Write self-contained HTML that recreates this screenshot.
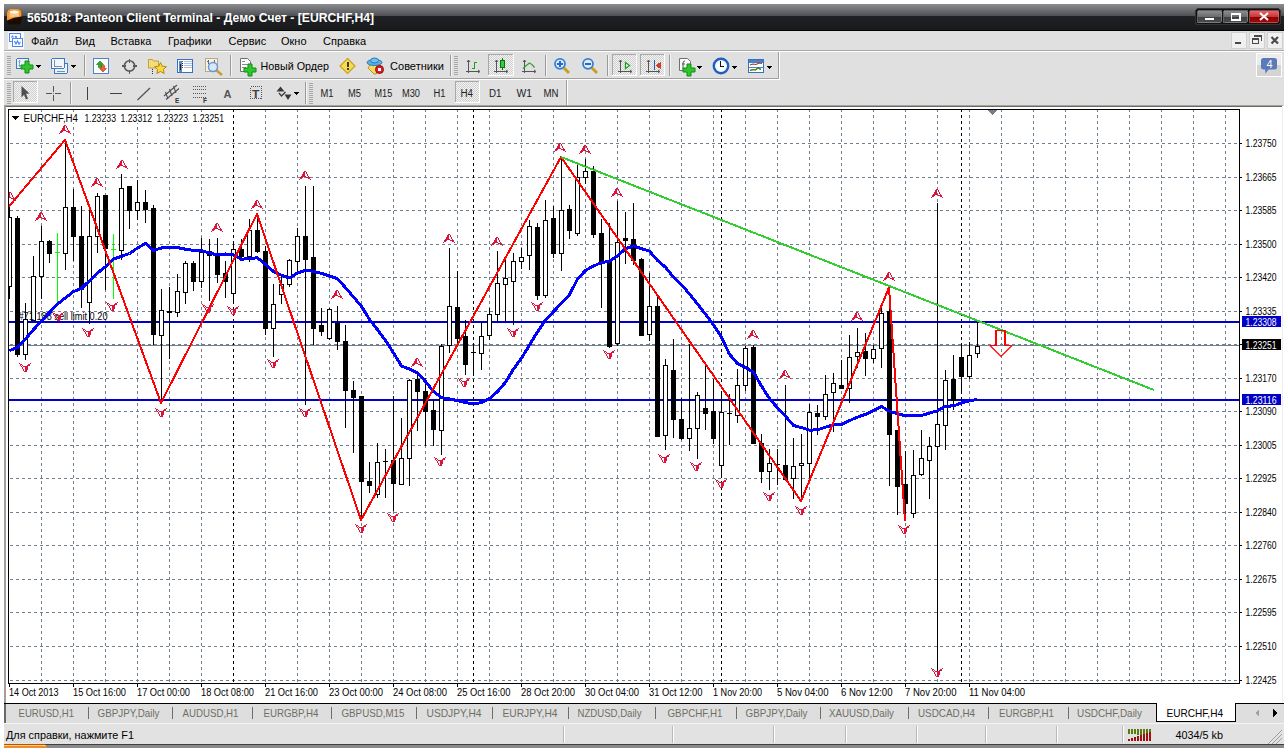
<!DOCTYPE html><html><head><meta charset="utf-8"><style>html,body{margin:0;padding:0;background:#fff;overflow:hidden}svg{display:block}</style></head><body><svg width="1288" height="748" viewBox="0 0 1288 748" font-family="Liberation Sans" shape-rendering="crispEdges">
<defs>
<linearGradient id="tb" x1="0" y1="0" x2="0" y2="1">
 <stop offset="0" stop-color="#8b8d91"/><stop offset="0.45" stop-color="#4d4f53"/>
 <stop offset="0.46" stop-color="#202124"/><stop offset="1" stop-color="#18191b"/>
</linearGradient>
<linearGradient id="btn" x1="0" y1="0" x2="0" y2="1">
 <stop offset="0" stop-color="#8e9094"/><stop offset="0.5" stop-color="#6a6c70"/><stop offset="0.51" stop-color="#3e4044"/><stop offset="1" stop-color="#4a4c50"/>
</linearGradient>
<linearGradient id="cls" x1="0" y1="0" x2="0" y2="1">
 <stop offset="0" stop-color="#e86a6a"/><stop offset="0.5" stop-color="#c83838"/><stop offset="0.51" stop-color="#8a0000"/><stop offset="1" stop-color="#a00a0a"/>
</linearGradient>
<linearGradient id="logo" x1="0" y1="0" x2="0" y2="1">
 <stop offset="0" stop-color="#ffb040"/><stop offset="0.55" stop-color="#f08a10"/><stop offset="0.56" stop-color="#301000"/><stop offset="1" stop-color="#100400"/>
</linearGradient>
<pattern id="dots" width="2" height="2" patternUnits="userSpaceOnUse"><rect width="2" height="2" fill="#f4f4f4"/><rect width="1" height="1" fill="#cfcfcf"/><rect x="1" y="1" width="1" height="1" fill="#cfcfcf"/></pattern>
</defs>
<rect width="1288" height="748" fill="#ffffff"/>
<rect x="4" y="4" width="1280" height="27" fill="url(#tb)"/>
<rect x="4" y="30" width="1280" height="1" fill="#000"/>
<rect x="7" y="9" width="14.5" height="15.5" rx="4" fill="#1c0c00" shape-rendering="auto"/>
<path d="M7 20.5 V13 Q7 9 11 9 H17.5 Q21.5 9 21.5 13 V16.5 Q14 16.8 7 20.5 Z" fill="#f59a30" shape-rendering="auto"/>
<path d="M9.5 17.5 V13.5 Q10 11 14 10.8 Q18.5 11 19 13.5 V16.5 Q14 16.5 9.5 17.5 Z" fill="#ffd0a0" opacity="0.8" shape-rendering="auto"/>
<ellipse cx="14.3" cy="12" rx="4.5" ry="1.5" fill="#ffffff" opacity="0.85" shape-rendering="auto"/>
<text x="27" y="21.5" font-size="12.5" fill="#ffffff" font-weight="bold" textLength="347" lengthAdjust="spacingAndGlyphs" >565018: Panteon Client Terminal - Демо Счет - [EURCHF,H4]</text>
<rect x="1195.5" y="8.5" width="85" height="16" rx="3" fill="#111" stroke="#333"/>
<rect x="1197.5" y="10.5" width="24" height="12" rx="1.5" fill="url(#btn)" stroke="#9a9a9a" stroke-opacity="0.6"/>
<rect x="1223.5" y="10.5" width="24" height="12" rx="1.5" fill="url(#btn)" stroke="#9a9a9a" stroke-opacity="0.6"/>
<rect x="1249.5" y="10.5" width="29" height="12" rx="1.5" fill="url(#cls)" stroke="#f08080" stroke-opacity="0.5"/>
<rect x="1205" y="17.5" width="9" height="2.5" fill="#fff"/>
<path d="M1231.5 20 V13.8 H1240 V20 Z" fill="none" stroke="#fff" stroke-width="1.2"/><rect x="1231" y="13" width="10" height="2" fill="#fff"/>
<path d="M1260 13 L1268 20 M1268 13 L1260 20" stroke="#fff" stroke-width="2" shape-rendering="auto"/>
<rect x="4" y="31" width="1280" height="20" fill="#e0e0e0"/>
<rect x="8" y="32" width="16" height="17" fill="#f8f8f8"/>
<rect x="9.5" y="33.5" width="11" height="8" fill="#fff" stroke="#4a88f0" stroke-width="1.3"/>
<path d="M11.5 37.5 l1 -1.5 l1 1.5 M15 36 l1 1.5 l1 -1" fill="none" stroke="#4a88f0" stroke-width="1.2" shape-rendering="auto"/>
<rect x="12.5" y="38.5" width="10" height="8" fill="#fff" stroke="#4a88f0" stroke-width="1.3"/>
<path d="M14.5 41 l1.5 3 l1.5 -3 l1.5 3 l1.5 -2" fill="none" stroke="#4a88f0" stroke-width="1.2" shape-rendering="auto"/>
<text x="31" y="45" font-size="11" fill="#000" >Файл</text>
<text x="75" y="45" font-size="11" fill="#000" >Вид</text>
<text x="110.5" y="45" font-size="11" fill="#000" >Вставка</text>
<text x="168" y="45" font-size="11" fill="#000" >Графики</text>
<text x="228.5" y="45" font-size="11" fill="#000" >Сервис</text>
<text x="281" y="45" font-size="11" fill="#000" >Окно</text>
<text x="323" y="45" font-size="11" fill="#000" >Справка</text>
<rect x="1231.5" y="32.5" width="15" height="16" fill="#f0f0f0" stroke="#d0d0d0"/>
<rect x="1249.5" y="32.5" width="15" height="16" fill="#f0f0f0" stroke="#d0d0d0"/>
<rect x="1267.5" y="32.5" width="15" height="16" fill="#f0f0f0" stroke="#d0d0d0"/>
<rect x="1235" y="42" width="6" height="2" fill="#4a4a4a"/>
<rect x="1252.5" y="38.5" width="6" height="5" fill="none" stroke="#4a4a4a"/><rect x="1252" y="38" width="7" height="2" fill="#4a4a4a"/>
<path d="M1254.5 35.5 H1261.5 V41" fill="none" stroke="#4a4a4a" stroke-width="1.2"/><rect x="1254" y="35" width="8" height="1.5" fill="#4a4a4a"/>
<path d="M1271.5 37 L1278 43.5 M1278 37 L1271.5 43.5" stroke="#4a4a4a" stroke-width="2.2" shape-rendering="auto"/>
<rect x="4" y="50" width="1280" height="1" fill="#a8a8a8"/>
<rect x="4" y="51" width="1280" height="1" fill="#ffffff"/>
<rect x="4" y="52" width="1280" height="54" fill="#e0e0e0"/>
<rect x="4" y="78" width="775" height="1" fill="#a0a0a0"/><rect x="4" y="79" width="776" height="1" fill="#ffffff"/>
<rect x="778" y="52" width="1" height="27" fill="#a0a0a0"/><rect x="779" y="52" width="1" height="28" fill="#ffffff"/>
<rect x="7" y="56" width="4" height="1" fill="#a8a8a8"/>
<rect x="7" y="58" width="4" height="1" fill="#a8a8a8"/>
<rect x="7" y="60" width="4" height="1" fill="#a8a8a8"/>
<rect x="7" y="62" width="4" height="1" fill="#a8a8a8"/>
<rect x="7" y="64" width="4" height="1" fill="#a8a8a8"/>
<rect x="7" y="66" width="4" height="1" fill="#a8a8a8"/>
<rect x="7" y="68" width="4" height="1" fill="#a8a8a8"/>
<rect x="7" y="70" width="4" height="1" fill="#a8a8a8"/>
<rect x="7" y="72" width="4" height="1" fill="#a8a8a8"/>
<rect x="7" y="74" width="4" height="1" fill="#a8a8a8"/>
<rect x="16.5" y="58.5" width="12" height="10" rx="1.5" fill="#eaf2fb" stroke="#3f78c4"/>
<path d="M19.5 60.5 v6 M18.5 61.5 l1 -1 l1 1 M18.5 65.5 l1 1 l1 -1" stroke="#8aa0b8" fill="none" shape-rendering="auto"/>
<path d="M25.0 61 h4 v4.0 h4.0 v4 h-4.0 v4.0 h-4 v-4.0 h-4.0 v-4 h4.0 z" fill="#2ec82e" stroke="#128a12" stroke-width="1" shape-rendering="auto"/>
<path d="M36 65 h5 l-2.5 3 z" fill="#000"/>
<rect x="54.5" y="63.5" width="13" height="10" rx="1.5" fill="#eaf2fb" stroke="#3f78c4"/>
<rect x="51.5" y="58.5" width="13" height="10" rx="1.5" fill="#f2f7fd" stroke="#3f78c4"/>
<path d="M54.5 60 v6 M54 66.5 h8 M57 71.5 h8" stroke="#7890a8" fill="none"/>
<path d="M71 65 h5 l-2.5 3 z" fill="#000"/>
<rect x="84" y="55" width="1" height="21" fill="#9a9a9a"/><rect x="85" y="55" width="1" height="21" fill="#f4f4f4"/>
<rect x="93.5" y="58.5" width="15" height="15" rx="1.5" fill="#ffffff" stroke="#4a86d0" stroke-width="1.2"/>
<path d="M100 61 l-3.5 3.5 h2 v3 h3 v-3 h2 z" fill="#20b020" stroke="#107010" stroke-width="0.6" shape-rendering="auto"/>
<path d="M103 72 l-3.5 -3.5 h2 v-3 h3 v3 h2 z" fill="#f06030" stroke="#b03010" stroke-width="0.6" shape-rendering="auto"/>
<circle cx="129.5" cy="66" r="5.2" fill="none" stroke="#5a5a5a" stroke-width="1.6" shape-rendering="auto"/>
<path d="M122 66 h4 M133 66 h4 M129.5 58.5 v4 M129.5 69.5 v4" stroke="#5a5a5a" stroke-width="1.6"/>
<path d="M148.5 59.5 h4 l1 1.5 h5 v7 h-10 z" fill="#f4dc78" stroke="#c0a040" shape-rendering="auto"/>
<rect x="152" y="69" width="1" height="1" fill="#333"/><rect x="152" y="71" width="1" height="1" fill="#333"/><rect x="152" y="73" width="1" height="1" fill="#333"/>
<path d="M160.5 62.5 l1.8 3.7 4.1 .5 -3 2.8 .8 4 -3.7 -2 -3.7 2 .8 -4 -3 -2.8 4.1 -.5 z" fill="#f8d840" stroke="#b88a10" shape-rendering="auto"/>
<rect x="177.5" y="59.5" width="15" height="13" rx="1.5" fill="#ffffff" stroke="#3a70c0" stroke-width="1.5"/>
<rect x="178.5" y="60.5" width="3" height="11" fill="#5a8ed0"/><rect x="179.5" y="64" width="1" height="6" fill="#222"/>
<rect x="182" y="61" width="1" height="1" fill="#e02020"/><rect x="184" y="61" width="8" height="1" fill="#a8c4e8"/>
<rect x="182" y="63" width="1" height="1" fill="#222"/><rect x="184" y="63" width="8" height="1" fill="#a8c4e8"/>
<rect x="182" y="65" width="1" height="1" fill="#222"/><rect x="184" y="65" width="8" height="1" fill="#a8c4e8"/>
<rect x="182" y="67" width="1" height="1" fill="#e02020"/><rect x="184" y="67" width="8" height="1" fill="#a8c4e8"/>
<rect x="205.5" y="58.5" width="12" height="13" fill="#f6f2e8" stroke="#b8a888"/>
<path d="M208 60 v4 M207 61 h2 M214 60 v4" stroke="#667" fill="none"/>
<path d="M216 70 l6 5" stroke="#c8a020" stroke-width="2.5" shape-rendering="auto"/>
<circle cx="213" cy="67" r="4.5" fill="#d8e8f8" stroke="#6a98d0" stroke-width="1.5" shape-rendering="auto"/>
<rect x="230" y="55" width="1" height="21" fill="#9a9a9a"/><rect x="231" y="55" width="1" height="21" fill="#f4f4f4"/>
<path d="M240.5 58.5 h7 l3 3 v10 h-10 z" fill="#fafafa" stroke="#707070" shape-rendering="auto"/>
<rect x="242" y="61" width="3" height="1" fill="#888"/><rect x="242" y="64" width="6" height="1" fill="#888"/><rect x="242" y="67" width="4" height="1" fill="#888"/>
<path d="M248.0 64 h4 v4.0 h4.0 v4 h-4.0 v4.0 h-4 v-4.0 h-4.0 v-4 h4.0 z" fill="#2ec82e" stroke="#128a12" stroke-width="1" shape-rendering="auto"/>
<text x="260.5" y="70" font-size="11" fill="#000" textLength="68.5" lengthAdjust="spacingAndGlyphs" >Новый Ордер</text>
<path d="M347.5 58.5 l7.5 7.5 l-7.5 7.5 l-7.5 -7.5 z" fill="#f8dc50" stroke="#c8a020" stroke-width="1.2" shape-rendering="auto"/>
<rect x="346.5" y="61.5" width="2" height="5" fill="#3a3a3a"/><rect x="346.5" y="68" width="2" height="2" fill="#3a3a3a"/>
<path d="M368 68 q1 -4 7 -4 q6 0 7 4 l-6 6 h-2 z" fill="#f4d860" stroke="#b89030" shape-rendering="auto"/>
<ellipse cx="374.5" cy="62.5" rx="7.5" ry="3" fill="#5ab0e8" stroke="#2a78b8" shape-rendering="auto"/>
<ellipse cx="374.5" cy="60.5" rx="4" ry="2.5" fill="#70c0f0" stroke="#2a78b8" shape-rendering="auto"/>
<circle cx="379.5" cy="69.5" r="4" fill="#d82020" stroke="#901010" shape-rendering="auto"/><rect x="378" y="68" width="3" height="3" fill="#fff"/>
<text x="390" y="70" font-size="11" fill="#000" textLength="54" lengthAdjust="spacingAndGlyphs" >Советники</text>
<rect x="450" y="55" width="1" height="21" fill="#9a9a9a"/><rect x="451" y="55" width="1" height="21" fill="#f4f4f4"/>
<rect x="454" y="56" width="4" height="1" fill="#a8a8a8"/>
<rect x="454" y="58" width="4" height="1" fill="#a8a8a8"/>
<rect x="454" y="60" width="4" height="1" fill="#a8a8a8"/>
<rect x="454" y="62" width="4" height="1" fill="#a8a8a8"/>
<rect x="454" y="64" width="4" height="1" fill="#a8a8a8"/>
<rect x="454" y="66" width="4" height="1" fill="#a8a8a8"/>
<rect x="454" y="68" width="4" height="1" fill="#a8a8a8"/>
<rect x="454" y="70" width="4" height="1" fill="#a8a8a8"/>
<rect x="454" y="72" width="4" height="1" fill="#a8a8a8"/>
<rect x="454" y="74" width="4" height="1" fill="#a8a8a8"/>
<path d="M468.5 60 V73 M466 71.5 H479" stroke="#555" fill="none"/>
<path d="M467 62 l1.5 -2 l1.5 2 M478 70 l2 1.5 l-2 1.5" stroke="#555" fill="none" shape-rendering="auto"/>
<path d="M474.5 62 V69 M474.5 62.5 H477 M474.5 68.5 H472" stroke="#20a020" stroke-width="1.4" fill="none"/>
<rect x="488" y="54" width="26" height="22" fill="url(#dots)"/>
<path d="M488.5 76 V54.5 H514" stroke="#a8a8a8" fill="none"/><path d="M488 75.5 H513.5 V54" stroke="#ffffff" fill="none"/>
<path d="M496.5 60 V73 M494 71.5 H507" stroke="#555" fill="none"/>
<path d="M495 62 l1.5 -2 l1.5 2 M506 70 l2 1.5 l-2 1.5" stroke="#555" fill="none" shape-rendering="auto"/>
<rect x="500.5" y="60.5" width="4" height="7" fill="#30d040" stroke="#107010"/><path d="M502.5 58 v2 M502.5 68 v2" stroke="#107010"/>
<path d="M524.5 60 V73 M522 71.5 H535" stroke="#555" fill="none"/>
<path d="M523 62 l1.5 -2 l1.5 2 M534 70 l2 1.5 l-2 1.5" stroke="#555" fill="none" shape-rendering="auto"/>
<path d="M523 68.5 q3 -3 6.5 -5.5 q2.5 1 5 4.5" stroke="#30a030" stroke-width="1.3" fill="none" shape-rendering="auto"/>
<rect x="545" y="55" width="1" height="21" fill="#9a9a9a"/><rect x="546" y="55" width="1" height="21" fill="#f4f4f4"/>
<path d="M564 68 l5 5" stroke="#c8a020" stroke-width="3" shape-rendering="auto"/>
<circle cx="560" cy="63.8" r="5" fill="#dcecfc" stroke="#3a7ed0" stroke-width="1.8" shape-rendering="auto"/>
<rect x="557" y="63" width="6" height="2" fill="#2a6ab8"/>
<rect x="559" y="61" width="2" height="6" fill="#2a6ab8"/>
<path d="M592 68 l5 5" stroke="#c8a020" stroke-width="3" shape-rendering="auto"/>
<circle cx="588" cy="63.8" r="5" fill="#dcecfc" stroke="#3a7ed0" stroke-width="1.8" shape-rendering="auto"/>
<rect x="585" y="63" width="6" height="2" fill="#2a6ab8"/>
<rect x="607" y="55" width="1" height="21" fill="#9a9a9a"/><rect x="608" y="55" width="1" height="21" fill="#f4f4f4"/>
<rect x="612" y="54" width="25" height="22" fill="url(#dots)"/>
<path d="M612.5 76 V54.5 H637" stroke="#a8a8a8" fill="none"/><path d="M612 75.5 H636.5 V54" stroke="#ffffff" fill="none"/>
<path d="M620.5 60 V73 M618 71.5 H631" stroke="#555" fill="none"/>
<path d="M619 62 l1.5 -2 l1.5 2 M630 70 l2 1.5 l-2 1.5" stroke="#555" fill="none" shape-rendering="auto"/>
<path d="M625.5 62.5 l4 3 l-4 3 z" fill="#ffffff" stroke="#20a020" stroke-width="1.3" shape-rendering="auto"/>
<rect x="640" y="54" width="25" height="22" fill="url(#dots)"/>
<path d="M640.5 76 V54.5 H665" stroke="#a8a8a8" fill="none"/><path d="M640 75.5 H664.5 V54" stroke="#ffffff" fill="none"/>
<path d="M648.5 60 V73 M646 71.5 H659" stroke="#555" fill="none"/>
<path d="M647 62 l1.5 -2 l1.5 2 M658 70 l2 1.5 l-2 1.5" stroke="#555" fill="none" shape-rendering="auto"/>
<rect x="654" y="60" width="1" height="10" fill="#2060b0"/><path d="M660 63 l-3.5 2.5 l3.5 2.5 z M658 65 h3" fill="#d04020" stroke="#d04020"/>
<rect x="669" y="55" width="1" height="21" fill="#9a9a9a"/><rect x="670" y="55" width="1" height="21" fill="#f4f4f4"/>
<path d="M679.5 58.5 h8 l3 3 v9 h-11 z" fill="#fafafa" stroke="#707070" shape-rendering="auto"/>
<path d="M683 69 v-6 q0 -2 2 -2 M682 64 h3" stroke="#555" fill="none" shape-rendering="auto"/>
<path d="M687.0 64 h4 v4.0 h4.0 v4 h-4.0 v4.0 h-4 v-4.0 h-4.0 v-4 h4.0 z" fill="#2ec82e" stroke="#128a12" stroke-width="1" shape-rendering="auto"/>
<path d="M697 66 h5 l-2.5 3 z" fill="#000"/>
<circle cx="721" cy="66" r="7.2" fill="#f8fbff" stroke="#1f5fc0" stroke-width="2.4" shape-rendering="auto"/>
<path d="M720.5 61 v5.5 h3.5" stroke="#111" fill="none" stroke-width="1.2"/>
<path d="M732 66 h5 l-2.5 3 z" fill="#000"/>
<rect x="748.5" y="59.5" width="15" height="13" fill="#ffffff" stroke="#3a70c0" stroke-width="1.4"/><rect x="749" y="60" width="14" height="2.5" fill="#4a80c8"/>
<rect x="749" y="66.5" width="14" height="1" fill="#4a80c8"/>
<path d="M750 65 l3 -1 l3 0.5 l3 -1.5 l3 0.5 M750 70.5 l3 -1 l2.5 0.5 l2.5 -2 l3 1.5" stroke-width="1.1" fill="none" shape-rendering="auto" stroke="#b03020"/>
<path d="M750 70.5 l3 -1 l2.5 0.5 l2.5 -2 l3 1.5" stroke-width="1.1" fill="none" shape-rendering="auto" stroke="#20a020"/>
<path d="M767 66 h5 l-2.5 3 z" fill="#000"/>
<rect x="1256.5" y="53.5" width="25" height="23" fill="#ececec" stroke="#ffffff"/>
<rect x="1257" y="65" width="24" height="11" fill="#d4d4d4"/>
<rect x="1261" y="58" width="16" height="11.5" rx="2.5" fill="#5a7ab8" shape-rendering="auto"/><path d="M1265 69 l0.5 4.5 l3.5 -4.5 z" fill="#5a7ab8" shape-rendering="auto"/>
<text x="1269.5" y="67.5" font-size="11" fill="#fff" text-anchor="middle" >4</text>
<rect x="566" y="80" width="1" height="25" fill="#a0a0a0"/><rect x="567" y="80" width="1" height="25" fill="#ffffff"/>
<rect x="7" y="83" width="4" height="1" fill="#a8a8a8"/>
<rect x="7" y="85" width="4" height="1" fill="#a8a8a8"/>
<rect x="7" y="87" width="4" height="1" fill="#a8a8a8"/>
<rect x="7" y="89" width="4" height="1" fill="#a8a8a8"/>
<rect x="7" y="91" width="4" height="1" fill="#a8a8a8"/>
<rect x="7" y="93" width="4" height="1" fill="#a8a8a8"/>
<rect x="7" y="95" width="4" height="1" fill="#a8a8a8"/>
<rect x="7" y="97" width="4" height="1" fill="#a8a8a8"/>
<rect x="7" y="99" width="4" height="1" fill="#a8a8a8"/>
<rect x="7" y="101" width="4" height="1" fill="#a8a8a8"/>
<rect x="7" y="103" width="4" height="1" fill="#a8a8a8"/>
<rect x="13" y="81" width="25" height="22" fill="url(#dots)"/>
<path d="M13.5 103 V81.5 H38" stroke="#a8a8a8" fill="none"/><path d="M13 102.5 H37.5 V81" stroke="#ffffff" fill="none"/>
<path d="M21.5 86 L29.5 93.5 L26 93.8 L28 98.5 L26 99.5 L24 94.8 L21.5 97.5 z" fill="#505050" shape-rendering="auto"/>
<path d="M46 93.5 h6 M55 93.5 h6 M53.5 86 v6 M53.5 95 v6" stroke="#555" stroke-width="1.2"/>
<rect x="53" y="93" width="1" height="1" fill="#888"/>
<rect x="70" y="82" width="1" height="22" fill="#9a9a9a"/><rect x="71" y="82" width="1" height="22" fill="#f4f4f4"/>
<rect x="87" y="87" width="1" height="13" fill="#404040"/>
<rect x="110" y="93" width="12" height="1" fill="#404040"/>
<path d="M137.5 100 L150 88" stroke="#505050" stroke-width="1.2" shape-rendering="auto"/>
<path d="M164 96 L177 85 M166 99.5 L179 88.5 M165.5 92 L168 99 M169.5 89 L172 96 M173.5 86 L176 93" stroke="#505050" stroke-width="1.1" fill="none" shape-rendering="auto"/>
<text x="175" y="102.5" font-size="6.5" fill="#333" font-weight="bold" >E</text>
<path d="M193 86.5 h13" stroke="#555" stroke-dasharray="1 1"/>
<path d="M193 89.5 h13" stroke="#555" stroke-dasharray="1 1"/>
<path d="M193 93.5 h13" stroke="#555" stroke-dasharray="1 1"/>
<path d="M193 97.5 h13" stroke="#555" stroke-dasharray="1 1"/>
<text x="203" y="102.5" font-size="6.5" fill="#333" font-weight="bold" >F</text>
<text x="223.5" y="97.5" font-size="11" fill="#555" font-weight="bold" textLength="8" lengthAdjust="spacingAndGlyphs" >A</text>
<rect x="250.5" y="86.5" width="11" height="12" fill="none" stroke="#555" stroke-dasharray="1 1"/>
<text x="252" y="97.5" font-size="11" fill="#444" font-weight="bold" textLength="7.5" lengthAdjust="spacingAndGlyphs" >T</text>
<path d="M276.5 91.5 L280.5 86.5 L284.5 91.5 Z M284.5 94.5 L291.5 94.5 L288 100 Z" fill="#3a3a3a" shape-rendering="auto"/><path d="M279 93 L281.5 96 L285.5 92" stroke="#3a3a3a" fill="none" stroke-width="1.4" shape-rendering="auto"/>
<path d="M294 92 h5 l-2.5 3 z" fill="#000"/>
<rect x="305" y="82" width="1" height="22" fill="#9a9a9a"/><rect x="306" y="82" width="1" height="22" fill="#f4f4f4"/>
<rect x="309" y="83" width="4" height="1" fill="#a8a8a8"/>
<rect x="309" y="85" width="4" height="1" fill="#a8a8a8"/>
<rect x="309" y="87" width="4" height="1" fill="#a8a8a8"/>
<rect x="309" y="89" width="4" height="1" fill="#a8a8a8"/>
<rect x="309" y="91" width="4" height="1" fill="#a8a8a8"/>
<rect x="309" y="93" width="4" height="1" fill="#a8a8a8"/>
<rect x="309" y="95" width="4" height="1" fill="#a8a8a8"/>
<rect x="309" y="97" width="4" height="1" fill="#a8a8a8"/>
<rect x="309" y="99" width="4" height="1" fill="#a8a8a8"/>
<rect x="309" y="101" width="4" height="1" fill="#a8a8a8"/>
<rect x="309" y="103" width="4" height="1" fill="#a8a8a8"/>
<rect x="455" y="81" width="25" height="22" fill="url(#dots)"/>
<path d="M455.5 103 V81.5 H480" stroke="#a8a8a8" fill="none"/><path d="M455 102.5 H479.5 V81" stroke="#ffffff" fill="none"/>
<text x="320.5" y="97" font-size="10" fill="#222" textLength="13" lengthAdjust="spacingAndGlyphs" >M1</text>
<text x="348" y="97" font-size="10" fill="#222" textLength="13" lengthAdjust="spacingAndGlyphs" >M5</text>
<text x="374.5" y="97" font-size="10" fill="#222" textLength="17.7" lengthAdjust="spacingAndGlyphs" >M15</text>
<text x="402" y="97" font-size="10" fill="#222" textLength="18" lengthAdjust="spacingAndGlyphs" >M30</text>
<text x="433.5" y="97" font-size="10" fill="#222" textLength="12" lengthAdjust="spacingAndGlyphs" >H1</text>
<text x="460.5" y="97" font-size="10" fill="#222" textLength="12.5" lengthAdjust="spacingAndGlyphs" >H4</text>
<text x="489" y="97" font-size="10" fill="#222" textLength="12.5" lengthAdjust="spacingAndGlyphs" >D1</text>
<text x="516.5" y="97" font-size="10" fill="#222" textLength="15.5" lengthAdjust="spacingAndGlyphs" >W1</text>
<text x="543.5" y="97" font-size="10" fill="#222" textLength="15" lengthAdjust="spacingAndGlyphs" >MN</text>
<rect x="4" y="105" width="1279" height="1" fill="#a4a4a0"/>
<rect x="4" y="106" width="1278" height="1" fill="#6a6a5e"/>
<rect x="4" y="107" width="1284" height="596" fill="#ffffff"/>
<rect x="4" y="106" width="2" height="597" fill="#a0a098"/>
<rect x="1282" y="107" width="1" height="596" fill="#eeeeee"/>
<svg x="0" y="0" width="1288" height="748">
<clipPath id="cc"><rect x="9" y="110" width="1230" height="573"/></clipPath>
<g clip-path="url(#cc)">
<path d="M4 143.5 H1239" stroke="#708090" stroke-dasharray="3 3"/>
<path d="M4 177.5 H1239" stroke="#708090" stroke-dasharray="3 3"/>
<path d="M4 210.5 H1239" stroke="#708090" stroke-dasharray="3 3"/>
<path d="M4 244.5 H1239" stroke="#708090" stroke-dasharray="3 3"/>
<path d="M4 277.5 H1239" stroke="#708090" stroke-dasharray="3 3"/>
<path d="M4 311.5 H1239" stroke="#708090" stroke-dasharray="3 3"/>
<path d="M4 344.5 H1239" stroke="#708090" stroke-dasharray="3 3"/>
<path d="M4 378.5 H1239" stroke="#708090" stroke-dasharray="3 3"/>
<path d="M4 411.5 H1239" stroke="#708090" stroke-dasharray="3 3"/>
<path d="M4 445.5 H1239" stroke="#708090" stroke-dasharray="3 3"/>
<path d="M4 478.5 H1239" stroke="#708090" stroke-dasharray="3 3"/>
<path d="M4 512.5 H1239" stroke="#708090" stroke-dasharray="3 3"/>
<path d="M4 545.5 H1239" stroke="#708090" stroke-dasharray="3 3"/>
<path d="M4 579.5 H1239" stroke="#708090" stroke-dasharray="3 3"/>
<path d="M4 612.5 H1239" stroke="#708090" stroke-dasharray="3 3"/>
<path d="M4 646.5 H1239" stroke="#708090" stroke-dasharray="3 3"/>
<path d="M4 680.5 H1239" stroke="#708090" stroke-dasharray="3 3"/>
<path d="M41.5 109 V683" stroke="#708090" stroke-dasharray="3 3"/>
<path d="M73.5 109 V683" stroke="#708090" stroke-dasharray="3 3"/>
<path d="M105.5 109 V683" stroke="#708090" stroke-dasharray="3 3"/>
<path d="M137.5 109 V683" stroke="#708090" stroke-dasharray="3 3"/>
<path d="M169.5 109 V683" stroke="#708090" stroke-dasharray="3 3"/>
<path d="M201.5 109 V683" stroke="#708090" stroke-dasharray="3 3"/>
<path d="M233.5 109 V683" stroke="#708090" stroke-dasharray="3 3"/>
<path d="M265.5 109 V683" stroke="#708090" stroke-dasharray="3 3"/>
<path d="M297.5 109 V683" stroke="#708090" stroke-dasharray="3 3"/>
<path d="M329.5 109 V683" stroke="#708090" stroke-dasharray="3 3"/>
<path d="M361.5 109 V683" stroke="#708090" stroke-dasharray="3 3"/>
<path d="M393.5 109 V683" stroke="#708090" stroke-dasharray="3 3"/>
<path d="M425.5 109 V683" stroke="#708090" stroke-dasharray="3 3"/>
<path d="M457.5 109 V683" stroke="#708090" stroke-dasharray="3 3"/>
<path d="M489.5 109 V683" stroke="#708090" stroke-dasharray="3 3"/>
<path d="M521.5 109 V683" stroke="#708090" stroke-dasharray="3 3"/>
<path d="M553.5 109 V683" stroke="#708090" stroke-dasharray="3 3"/>
<path d="M585.5 109 V683" stroke="#708090" stroke-dasharray="3 3"/>
<path d="M617.5 109 V683" stroke="#708090" stroke-dasharray="3 3"/>
<path d="M649.5 109 V683" stroke="#708090" stroke-dasharray="3 3"/>
<path d="M681.5 109 V683" stroke="#708090" stroke-dasharray="3 3"/>
<path d="M713.5 109 V683" stroke="#708090" stroke-dasharray="3 3"/>
<path d="M745.5 109 V683" stroke="#708090" stroke-dasharray="3 3"/>
<path d="M777.5 109 V683" stroke="#708090" stroke-dasharray="3 3"/>
<path d="M809.5 109 V683" stroke="#708090" stroke-dasharray="3 3"/>
<path d="M841.5 109 V683" stroke="#708090" stroke-dasharray="3 3"/>
<path d="M873.5 109 V683" stroke="#708090" stroke-dasharray="3 3"/>
<path d="M905.5 109 V683" stroke="#708090" stroke-dasharray="3 3"/>
<path d="M937.5 109 V683" stroke="#708090" stroke-dasharray="3 3"/>
<path d="M969.5 109 V683" stroke="#708090" stroke-dasharray="3 3"/>
<path d="M1001.5 109 V683" stroke="#708090" stroke-dasharray="3 3"/>
<path d="M1033.5 109 V683" stroke="#708090" stroke-dasharray="3 3"/>
<path d="M1065.5 109 V683" stroke="#708090" stroke-dasharray="3 3"/>
<path d="M1097.5 109 V683" stroke="#708090" stroke-dasharray="3 3"/>
<path d="M1129.5 109 V683" stroke="#708090" stroke-dasharray="3 3"/>
<path d="M1161.5 109 V683" stroke="#708090" stroke-dasharray="3 3"/>
<path d="M1193.5 109 V683" stroke="#708090" stroke-dasharray="3 3"/>
<path d="M1225.5 109 V683" stroke="#708090" stroke-dasharray="3 3"/>
<path d="M233.5 109 V683" stroke="#000" stroke-dasharray="3 3"/>
<path d="M473.5 109 V683" stroke="#000" stroke-dasharray="3 3"/>
<path d="M721.5 109 V683" stroke="#000" stroke-dasharray="3 3"/>
<path d="M961.5 109 V683" stroke="#000" stroke-dasharray="3 3"/>
<rect x="9" y="321" width="1230" height="2" fill="#0000c8"/>
<rect x="9" y="399" width="1230" height="2" fill="#0000c8"/>
<rect x="9" y="345" width="1230" height="1" fill="#708090"/>
<rect x="9" y="207" width="1" height="92" fill="#000"/>
<rect x="7.5" y="217.5" width="4" height="69" fill="#fff" stroke="#000"/>
<rect x="17" y="216" width="1" height="141" fill="#000"/>
<rect x="15" y="218" width="5" height="137" fill="#000"/>
<rect x="25" y="303" width="1" height="57" fill="#000"/>
<rect x="23.5" y="319.5" width="4" height="35" fill="#fff" stroke="#000"/>
<rect x="33" y="256" width="1" height="64" fill="#000"/>
<rect x="31.5" y="276.5" width="4" height="44" fill="#fff" stroke="#000"/>
<rect x="41" y="226" width="1" height="73" fill="#000"/>
<rect x="39.5" y="241.5" width="4" height="35" fill="#fff" stroke="#000"/>
<rect x="49" y="240" width="1" height="23" fill="#000"/>
<rect x="47" y="241" width="5" height="13" fill="#000"/>
<rect x="57" y="233" width="1" height="72" fill="#00ff00"/>
<rect x="55" y="252" width="5" height="1" fill="#00ff00"/>
<rect x="65" y="141" width="1" height="129" fill="#000"/>
<rect x="63.5" y="207.5" width="4" height="46" fill="#fff" stroke="#000"/>
<rect x="73" y="189" width="1" height="72" fill="#000"/>
<rect x="71" y="207" width="5" height="30" fill="#000"/>
<rect x="81" y="206" width="1" height="102" fill="#000"/>
<rect x="79" y="236" width="5" height="54" fill="#000"/>
<rect x="89" y="209" width="1" height="115" fill="#000"/>
<rect x="87.5" y="236.5" width="4" height="66" fill="#fff" stroke="#000"/>
<rect x="97" y="193" width="1" height="60" fill="#000"/>
<rect x="95.5" y="196.5" width="4" height="40" fill="#fff" stroke="#000"/>
<rect x="105" y="195" width="1" height="95" fill="#000"/>
<rect x="103" y="195" width="5" height="54" fill="#000"/>
<rect x="113" y="234" width="1" height="65" fill="#00ff00"/>
<rect x="111" y="249" width="5" height="1" fill="#00ff00"/>
<rect x="121" y="174" width="1" height="86" fill="#000"/>
<rect x="119.5" y="188.5" width="4" height="62" fill="#fff" stroke="#000"/>
<rect x="129" y="186" width="1" height="43" fill="#000"/>
<rect x="127" y="186" width="5" height="25" fill="#000"/>
<rect x="137" y="180" width="1" height="40" fill="#000"/>
<rect x="135.5" y="202.5" width="4" height="8" fill="#fff" stroke="#000"/>
<rect x="145" y="190" width="1" height="33" fill="#000"/>
<rect x="143" y="202" width="5" height="8" fill="#000"/>
<rect x="153" y="205" width="1" height="140" fill="#000"/>
<rect x="151" y="208" width="5" height="127" fill="#000"/>
<rect x="161" y="289" width="1" height="113" fill="#000"/>
<rect x="159.5" y="310.5" width="4" height="25" fill="#fff" stroke="#000"/>
<rect x="169" y="287" width="1" height="72" fill="#000"/>
<rect x="167" y="311" width="5" height="2" fill="#000"/>
<rect x="177" y="274" width="1" height="43" fill="#000"/>
<rect x="175.5" y="291.5" width="4" height="21" fill="#fff" stroke="#000"/>
<rect x="185" y="261" width="1" height="43" fill="#000"/>
<rect x="183.5" y="263.5" width="4" height="29" fill="#fff" stroke="#000"/>
<rect x="193" y="261" width="1" height="30" fill="#000"/>
<rect x="191" y="263" width="5" height="19" fill="#000"/>
<rect x="201" y="238" width="1" height="50" fill="#000"/>
<rect x="199.5" y="252.5" width="4" height="29" fill="#fff" stroke="#000"/>
<rect x="209" y="239" width="1" height="62" fill="#000"/>
<rect x="207" y="251" width="5" height="5" fill="#000"/>
<rect x="217" y="238" width="1" height="45" fill="#000"/>
<rect x="215" y="256" width="5" height="19" fill="#000"/>
<rect x="225" y="261" width="1" height="37" fill="#000"/>
<rect x="223" y="273" width="5" height="9" fill="#000"/>
<rect x="233" y="243" width="1" height="61" fill="#000"/>
<rect x="231.5" y="249.5" width="4" height="44" fill="#fff" stroke="#000"/>
<rect x="241" y="239" width="1" height="19" fill="#000"/>
<rect x="239" y="249" width="5" height="8" fill="#000"/>
<rect x="249" y="219" width="1" height="43" fill="#000"/>
<rect x="247.5" y="230.5" width="4" height="26" fill="#fff" stroke="#000"/>
<rect x="257" y="215" width="1" height="38" fill="#000"/>
<rect x="255" y="230" width="5" height="22" fill="#000"/>
<rect x="265" y="246" width="1" height="89" fill="#000"/>
<rect x="263" y="251" width="5" height="78" fill="#000"/>
<rect x="273" y="284" width="1" height="73" fill="#000"/>
<rect x="271.5" y="304.5" width="4" height="24" fill="#fff" stroke="#000"/>
<rect x="281" y="275" width="1" height="29" fill="#000"/>
<rect x="279.5" y="284.5" width="4" height="10" fill="#fff" stroke="#000"/>
<rect x="289" y="259" width="1" height="28" fill="#000"/>
<rect x="287.5" y="260.5" width="4" height="24" fill="#fff" stroke="#000"/>
<rect x="297" y="228" width="1" height="44" fill="#000"/>
<rect x="295.5" y="236.5" width="4" height="25" fill="#fff" stroke="#000"/>
<rect x="305" y="186" width="1" height="219" fill="#000"/>
<rect x="303" y="236" width="5" height="24" fill="#000"/>
<rect x="313" y="186" width="1" height="159" fill="#000"/>
<rect x="311" y="257" width="5" height="72" fill="#000"/>
<rect x="321" y="308" width="1" height="28" fill="#000"/>
<rect x="319" y="325" width="5" height="7" fill="#000"/>
<rect x="329" y="308" width="1" height="32" fill="#000"/>
<rect x="327.5" y="309.5" width="4" height="29" fill="#fff" stroke="#000"/>
<rect x="337" y="306" width="1" height="44" fill="#000"/>
<rect x="335" y="323" width="5" height="19" fill="#000"/>
<rect x="345" y="325" width="1" height="103" fill="#000"/>
<rect x="343" y="341" width="5" height="50" fill="#000"/>
<rect x="353" y="381" width="1" height="72" fill="#000"/>
<rect x="351" y="390" width="5" height="8" fill="#000"/>
<rect x="361" y="396" width="1" height="124" fill="#000"/>
<rect x="359" y="396" width="5" height="86" fill="#000"/>
<rect x="369" y="462" width="1" height="31" fill="#000"/>
<rect x="367" y="481" width="5" height="5" fill="#000"/>
<rect x="377" y="443" width="1" height="55" fill="#000"/>
<rect x="375.5" y="462.5" width="4" height="32" fill="#fff" stroke="#000"/>
<rect x="385" y="449" width="1" height="49" fill="#000"/>
<rect x="383" y="461" width="5" height="1" fill="#000"/>
<rect x="393" y="396" width="1" height="115" fill="#000"/>
<rect x="391" y="460" width="5" height="24" fill="#000"/>
<rect x="401" y="418" width="1" height="67" fill="#000"/>
<rect x="399.5" y="458.5" width="4" height="26" fill="#fff" stroke="#000"/>
<rect x="409" y="379" width="1" height="107" fill="#000"/>
<rect x="407.5" y="380.5" width="4" height="78" fill="#fff" stroke="#000"/>
<rect x="417" y="375" width="1" height="56" fill="#000"/>
<rect x="415" y="379" width="5" height="13" fill="#000"/>
<rect x="425" y="378" width="1" height="68" fill="#000"/>
<rect x="423" y="391" width="5" height="21" fill="#000"/>
<rect x="433" y="400" width="1" height="46" fill="#000"/>
<rect x="431" y="410" width="5" height="20" fill="#000"/>
<rect x="441" y="344" width="1" height="111" fill="#000"/>
<rect x="439.5" y="346.5" width="4" height="84" fill="#fff" stroke="#000"/>
<rect x="449" y="248" width="1" height="105" fill="#000"/>
<rect x="447.5" y="306.5" width="4" height="39" fill="#fff" stroke="#000"/>
<rect x="457" y="271" width="1" height="74" fill="#000"/>
<rect x="455" y="307" width="5" height="32" fill="#000"/>
<rect x="465" y="320" width="1" height="55" fill="#000"/>
<rect x="463" y="336" width="5" height="29" fill="#000"/>
<rect x="473" y="345" width="1" height="30" fill="#000"/>
<rect x="471" y="352" width="5" height="1" fill="#000"/>
<rect x="481" y="322" width="1" height="48" fill="#000"/>
<rect x="479.5" y="336.5" width="4" height="17" fill="#fff" stroke="#000"/>
<rect x="489" y="308" width="1" height="32" fill="#000"/>
<rect x="487.5" y="314.5" width="4" height="21" fill="#fff" stroke="#000"/>
<rect x="497" y="251" width="1" height="70" fill="#000"/>
<rect x="495.5" y="283.5" width="4" height="31" fill="#fff" stroke="#000"/>
<rect x="505" y="256" width="1" height="65" fill="#000"/>
<rect x="503.5" y="278.5" width="4" height="6" fill="#fff" stroke="#000"/>
<rect x="513" y="253" width="1" height="72" fill="#000"/>
<rect x="511.5" y="261.5" width="4" height="20" fill="#fff" stroke="#000"/>
<rect x="521" y="248" width="1" height="21" fill="#000"/>
<rect x="519.5" y="257.5" width="4" height="4" fill="#fff" stroke="#000"/>
<rect x="529" y="220" width="1" height="50" fill="#000"/>
<rect x="527.5" y="226.5" width="4" height="29" fill="#fff" stroke="#000"/>
<rect x="537" y="223" width="1" height="77" fill="#000"/>
<rect x="535" y="227" width="5" height="69" fill="#000"/>
<rect x="545" y="200" width="1" height="98" fill="#000"/>
<rect x="543.5" y="220.5" width="4" height="75" fill="#fff" stroke="#000"/>
<rect x="553" y="206" width="1" height="52" fill="#000"/>
<rect x="551" y="218" width="5" height="36" fill="#000"/>
<rect x="561" y="158" width="1" height="113" fill="#000"/>
<rect x="559.5" y="210.5" width="4" height="43" fill="#fff" stroke="#000"/>
<rect x="569" y="205" width="1" height="34" fill="#000"/>
<rect x="567" y="209" width="5" height="22" fill="#000"/>
<rect x="577" y="165" width="1" height="71" fill="#000"/>
<rect x="575.5" y="177.5" width="4" height="56" fill="#fff" stroke="#000"/>
<rect x="585" y="159" width="1" height="25" fill="#000"/>
<rect x="583.5" y="171.5" width="4" height="6" fill="#fff" stroke="#000"/>
<rect x="593" y="166" width="1" height="72" fill="#000"/>
<rect x="591" y="171" width="5" height="64" fill="#000"/>
<rect x="601" y="219" width="1" height="89" fill="#000"/>
<rect x="599" y="233" width="5" height="29" fill="#000"/>
<rect x="609" y="223" width="1" height="125" fill="#000"/>
<rect x="607" y="261" width="5" height="86" fill="#000"/>
<rect x="617" y="201" width="1" height="145" fill="#000"/>
<rect x="615.5" y="242.5" width="4" height="101" fill="#fff" stroke="#000"/>
<rect x="625" y="212" width="1" height="52" fill="#000"/>
<rect x="623" y="238" width="5" height="3" fill="#000"/>
<rect x="633" y="203" width="1" height="62" fill="#000"/>
<rect x="631" y="239" width="5" height="22" fill="#000"/>
<rect x="641" y="258" width="1" height="78" fill="#000"/>
<rect x="639" y="259" width="5" height="77" fill="#000"/>
<rect x="649" y="273" width="1" height="68" fill="#000"/>
<rect x="647.5" y="306.5" width="4" height="28" fill="#fff" stroke="#000"/>
<rect x="657" y="296" width="1" height="141" fill="#000"/>
<rect x="655" y="306" width="5" height="131" fill="#000"/>
<rect x="665" y="359" width="1" height="91" fill="#000"/>
<rect x="663.5" y="365.5" width="4" height="70" fill="#fff" stroke="#000"/>
<rect x="673" y="339" width="1" height="99" fill="#000"/>
<rect x="671" y="370" width="5" height="50" fill="#000"/>
<rect x="681" y="398" width="1" height="42" fill="#000"/>
<rect x="679" y="419" width="5" height="20" fill="#000"/>
<rect x="689" y="344" width="1" height="107" fill="#000"/>
<rect x="687.5" y="428.5" width="4" height="10" fill="#fff" stroke="#000"/>
<rect x="697" y="392" width="1" height="67" fill="#000"/>
<rect x="695.5" y="395.5" width="4" height="33" fill="#fff" stroke="#000"/>
<rect x="705" y="366" width="1" height="64" fill="#000"/>
<rect x="703" y="408" width="5" height="6" fill="#000"/>
<rect x="713" y="379" width="1" height="65" fill="#000"/>
<rect x="711" y="411" width="5" height="28" fill="#000"/>
<rect x="721" y="391" width="1" height="87" fill="#000"/>
<rect x="719.5" y="412.5" width="4" height="53" fill="#fff" stroke="#000"/>
<rect x="729" y="394" width="1" height="51" fill="#000"/>
<rect x="727" y="413" width="5" height="1" fill="#000"/>
<rect x="737" y="369" width="1" height="54" fill="#000"/>
<rect x="735.5" y="385.5" width="4" height="30" fill="#fff" stroke="#000"/>
<rect x="745" y="346" width="1" height="45" fill="#000"/>
<rect x="743.5" y="348.5" width="4" height="37" fill="#fff" stroke="#000"/>
<rect x="753" y="345" width="1" height="98" fill="#000"/>
<rect x="751" y="347" width="5" height="97" fill="#000"/>
<rect x="761" y="434" width="1" height="49" fill="#000"/>
<rect x="759" y="443" width="5" height="29" fill="#000"/>
<rect x="769" y="449" width="1" height="41" fill="#000"/>
<rect x="767.5" y="463.5" width="4" height="8" fill="#fff" stroke="#000"/>
<rect x="777" y="449" width="1" height="36" fill="#000"/>
<rect x="775" y="464" width="5" height="1" fill="#000"/>
<rect x="785" y="385" width="1" height="94" fill="#000"/>
<rect x="783" y="465" width="5" height="15" fill="#000"/>
<rect x="793" y="438" width="1" height="61" fill="#000"/>
<rect x="791.5" y="466.5" width="4" height="12" fill="#fff" stroke="#000"/>
<rect x="801" y="434" width="1" height="67" fill="#000"/>
<rect x="799.5" y="463.5" width="4" height="2" fill="#fff" stroke="#000"/>
<rect x="809" y="404" width="1" height="76" fill="#000"/>
<rect x="807.5" y="412.5" width="4" height="51" fill="#fff" stroke="#000"/>
<rect x="817" y="405" width="1" height="30" fill="#000"/>
<rect x="815" y="413" width="5" height="4" fill="#000"/>
<rect x="825" y="375" width="1" height="45" fill="#000"/>
<rect x="823.5" y="394.5" width="4" height="22" fill="#fff" stroke="#000"/>
<rect x="833" y="373" width="1" height="59" fill="#000"/>
<rect x="831.5" y="383.5" width="4" height="9" fill="#fff" stroke="#000"/>
<rect x="841" y="360" width="1" height="28" fill="#000"/>
<rect x="839" y="385" width="5" height="4" fill="#000"/>
<rect x="849" y="335" width="1" height="68" fill="#000"/>
<rect x="847.5" y="357.5" width="4" height="31" fill="#fff" stroke="#000"/>
<rect x="857" y="328" width="1" height="40" fill="#000"/>
<rect x="855.5" y="352.5" width="4" height="4" fill="#fff" stroke="#000"/>
<rect x="865" y="333" width="1" height="43" fill="#000"/>
<rect x="863" y="351" width="5" height="8" fill="#000"/>
<rect x="873" y="345" width="1" height="18" fill="#000"/>
<rect x="871.5" y="349.5" width="4" height="9" fill="#fff" stroke="#000"/>
<rect x="881" y="303" width="1" height="65" fill="#000"/>
<rect x="879.5" y="313.5" width="4" height="35" fill="#fff" stroke="#000"/>
<rect x="889" y="288" width="1" height="198" fill="#000"/>
<rect x="887" y="311" width="5" height="124" fill="#000"/>
<rect x="897" y="430" width="1" height="85" fill="#000"/>
<rect x="895" y="430" width="5" height="57" fill="#000"/>
<rect x="905" y="451" width="1" height="70" fill="#000"/>
<rect x="903" y="484" width="5" height="20" fill="#000"/>
<rect x="913" y="450" width="1" height="68" fill="#000"/>
<rect x="911.5" y="475.5" width="4" height="38" fill="#fff" stroke="#000"/>
<rect x="921" y="430" width="1" height="46" fill="#000"/>
<rect x="919.5" y="458.5" width="4" height="16" fill="#fff" stroke="#000"/>
<rect x="929" y="437" width="1" height="62" fill="#000"/>
<rect x="927.5" y="446.5" width="4" height="14" fill="#fff" stroke="#000"/>
<rect x="937" y="203" width="1" height="472" fill="#000"/>
<rect x="935.5" y="424.5" width="4" height="22" fill="#fff" stroke="#000"/>
<rect x="945" y="370" width="1" height="80" fill="#000"/>
<rect x="943.5" y="380.5" width="4" height="45" fill="#fff" stroke="#000"/>
<rect x="953" y="355" width="1" height="55" fill="#000"/>
<rect x="951" y="379" width="5" height="22" fill="#000"/>
<rect x="961" y="344" width="1" height="50" fill="#000"/>
<rect x="959" y="357" width="5" height="20" fill="#000"/>
<rect x="969" y="342" width="1" height="37" fill="#000"/>
<rect x="967.5" y="355.5" width="4" height="21" fill="#fff" stroke="#000"/>
<rect x="977" y="322" width="1" height="36" fill="#000"/>
<rect x="975.5" y="346.5" width="4" height="7" fill="#fff" stroke="#000"/>
<text x="18.5" y="319.5" font-size="10.5" fill="#000" textLength="89" lengthAdjust="spacingAndGlyphs" >#71 188 sell limit 0.20</text>
<polyline points="9.5,350.6 17.5,347.5 25.5,339 33.5,329.6 41.5,321 49.5,312.5 57.5,304 65.5,297.8 73.5,291.6 81.5,288.5 89.5,280.7 97.5,273 105.5,266.7 113.5,259 121.5,256.3 129.5,253.5 137.5,248 145.5,243.4 153.5,250.4 161.5,248 169.5,247.6 177.5,247.6 185.5,249.2 193.5,250.4 201.5,250.7 209.5,253 217.5,255 225.5,254 233.5,254.8 241.5,259.4 249.5,258.2 257.5,257.9 265.5,264.4 273.5,271.4 281.5,275.3 289.5,278 297.5,273 305.5,270.3 313.5,271.4 321.5,273.4 329.5,276 337.5,278.7 345.5,287.7 353.5,297 361.5,306.3 369.5,319.5 377.5,329.6 385.5,340.5 393.5,352.8 401.5,366 409.5,369.1 417.5,373 425.5,381.5 433.5,391.6 441.5,397.5 449.5,399 457.5,400.6 465.5,402.5 473.5,404 481.5,402.5 489.5,398.6 497.5,391.6 505.5,382.3 513.5,369.1 521.5,358.2 529.5,345 537.5,331.8 545.5,320.2 553.5,311.6 561.5,303.1 569.5,294.7 577.5,279.1 585.5,270.4 593.5,266 601.5,262.6 609.5,261.1 617.5,255.9 625.5,248.7 633.5,245.9 641.5,248.7 649.5,251.1 657.5,260.5 665.5,267.3 673.5,277.3 681.5,284.7 689.5,294 697.5,304 705.5,314.2 713.5,324.75 721.5,337.2 729.5,354.3 737.5,363.6 745.5,367.5 753.5,372.1 761.5,386.1 769.5,398.5 777.5,408 785.5,416.3 793.5,425.5 801.5,427.6 809.5,430.2 817.5,429.8 825.5,427.1 833.5,425 841.5,424.4 849.5,420.6 857.5,417.1 865.5,414.4 873.5,410.5 881.5,406.5 889.5,411.3 897.5,413.6 905.5,415.8 913.5,415.8 921.5,415.5 929.5,413.1 937.5,410.8 945.5,406.2 953.5,405.9 961.5,403 969.5,400.7 977.5,399.5" fill="none" stroke="#0000ff" stroke-width="3" stroke-linejoin="round" shape-rendering="crispEdges"/>
<polyline points="8,207.5 65,140 161,403 257,214 361,520 561,157 801,501 889,287.5 905,521" fill="none" stroke="#ff0000" stroke-width="2" stroke-linejoin="round" shape-rendering="crispEdges"/>
<path d="M561 157 L1154 390" stroke="#32cd32" stroke-width="2" shape-rendering="crispEdges"/>
<defs><path id="mu" d="M5 0h1v1h-1zM6 0h1v1h-1zM4 1h1v1h-1zM5 1h1v1h-1zM7 1h1v1h-1zM4 2h1v1h-1zM5 2h1v1h-1zM7 2h1v1h-1zM3 3h1v1h-1zM4 3h1v1h-1zM5 3h1v1h-1zM8 3h1v1h-1zM3 4h1v1h-1zM4 4h1v1h-1zM5 4h1v1h-1zM8 4h1v1h-1zM2 5h1v1h-1zM3 5h1v1h-1zM4 5h1v1h-1zM5 5h1v1h-1zM6 5h1v1h-1zM9 5h1v1h-1zM1 6h1v1h-1zM2 6h1v1h-1zM3 6h1v1h-1zM7 6h1v1h-1zM8 6h1v1h-1zM9 6h1v1h-1zM10 6h1v1h-1zM1 7h1v1h-1zM2 7h1v1h-1zM9 7h1v1h-1zM10 7h1v1h-1zM0 8h1v1h-1zM11 8h1v1h-1z" fill="#dc143c"/></defs>
<defs><path id="md" d="M0 0h1v1h-1zM11 0h1v1h-1zM1 1h1v1h-1zM2 1h1v1h-1zM9 1h1v1h-1zM10 1h1v1h-1zM1 2h1v1h-1zM3 2h1v1h-1zM8 2h1v1h-1zM9 2h1v1h-1zM10 2h1v1h-1zM2 3h1v1h-1zM4 3h1v1h-1zM5 3h1v1h-1zM6 3h1v1h-1zM7 3h1v1h-1zM8 3h1v1h-1zM3 4h1v1h-1zM6 4h1v1h-1zM7 4h1v1h-1zM8 4h1v1h-1zM3 5h1v1h-1zM6 5h1v1h-1zM7 5h1v1h-1zM8 5h1v1h-1zM4 6h1v1h-1zM6 6h1v1h-1zM7 6h1v1h-1zM8 6h1v1h-1zM4 7h1v1h-1zM6 7h1v1h-1zM7 7h1v1h-1zM5 8h1v1h-1zM6 8h1v1h-1zM7 8h1v1h-1z" fill="#dc143c"/></defs>
<use href="#mu" x="4" y="192"/>
<use href="#mu" x="35" y="212"/>
<use href="#mu" x="59" y="125"/>
<use href="#mu" x="91" y="178"/>
<use href="#mu" x="116" y="160"/>
<use href="#mu" x="211" y="223"/>
<use href="#mu" x="251" y="200"/>
<use href="#mu" x="299" y="171"/>
<use href="#mu" x="331" y="290"/>
<use href="#mu" x="411" y="358"/>
<use href="#mu" x="443" y="234"/>
<use href="#mu" x="491" y="237"/>
<use href="#mu" x="554" y="143"/>
<use href="#mu" x="579" y="145"/>
<use href="#mu" x="611" y="188"/>
<use href="#mu" x="747" y="330"/>
<use href="#mu" x="779" y="370"/>
<use href="#mu" x="851" y="312"/>
<use href="#mu" x="883" y="272"/>
<use href="#mu" x="931" y="189"/>
<use href="#md" x="19" y="363"/>
<use href="#md" x="52" y="312"/>
<use href="#md" x="82" y="328"/>
<use href="#md" x="106" y="302"/>
<use href="#md" x="155" y="408"/>
<use href="#md" x="202" y="304"/>
<use href="#md" x="227" y="306"/>
<use href="#md" x="267" y="359"/>
<use href="#md" x="299" y="408"/>
<use href="#md" x="355" y="524"/>
<use href="#md" x="387" y="513"/>
<use href="#md" x="434" y="457"/>
<use href="#md" x="458" y="378"/>
<use href="#md" x="507" y="328"/>
<use href="#md" x="531" y="302"/>
<use href="#md" x="603" y="350"/>
<use href="#md" x="658" y="454"/>
<use href="#md" x="690" y="462"/>
<use href="#md" x="715" y="479"/>
<use href="#md" x="763" y="492"/>
<use href="#md" x="795" y="506"/>
<use href="#md" x="898" y="525"/>
<use href="#md" x="931" y="668"/>
<path d="M990 345.5 H996 M1005 345.5 H1011 M990 345.5 L1001 356.5 L1012 345.5 M996 330.5 H1005" fill="none" stroke="#ff0000" stroke-width="1.2" shape-rendering="auto"/>
<rect x="995" y="330" width="2" height="16" fill="#ff0000"/><rect x="1004" y="330" width="2" height="16" fill="#ff0000"/>
<path d="M987 110 h10 l-5 5 z" fill="#708090"/>
</g></svg>
<rect x="9" y="112" width="219" height="11" fill="#fff"/>
<path d="M12 116 h7 l-3.5 4 z" fill="#000"/>
<text x="23.5" y="121.5" font-size="10" fill="#000" textLength="54.5" lengthAdjust="spacingAndGlyphs" >EURCHF,H4</text>
<text x="84.5" y="121.5" font-size="10" fill="#000" textLength="31.5" lengthAdjust="spacingAndGlyphs" >1.23233</text>
<text x="120.5" y="121.5" font-size="10" fill="#000" textLength="31.5" lengthAdjust="spacingAndGlyphs" >1.23312</text>
<text x="156.5" y="121.5" font-size="10" fill="#000" textLength="31.5" lengthAdjust="spacingAndGlyphs" >1.23223</text>
<text x="192.5" y="121.5" font-size="10" fill="#000" textLength="31.5" lengthAdjust="spacingAndGlyphs" >1.23251</text>
<rect x="8" y="109" width="1232" height="1" fill="#000"/>
<rect x="8" y="683" width="1232" height="1" fill="#000"/>
<rect x="8" y="109" width="1" height="575" fill="#000"/>
<rect x="1239" y="109" width="1" height="575" fill="#000"/>
<rect x="1240" y="143" width="2" height="1" fill="#000"/>
<text x="1245.5" y="147" font-size="10" fill="#000" textLength="31" lengthAdjust="spacingAndGlyphs" >1.23750</text>
<rect x="1240" y="177" width="2" height="1" fill="#000"/>
<text x="1245.5" y="181" font-size="10" fill="#000" textLength="31" lengthAdjust="spacingAndGlyphs" >1.23665</text>
<rect x="1240" y="210" width="2" height="1" fill="#000"/>
<text x="1245.5" y="214" font-size="10" fill="#000" textLength="31" lengthAdjust="spacingAndGlyphs" >1.23585</text>
<rect x="1240" y="244" width="2" height="1" fill="#000"/>
<text x="1245.5" y="248" font-size="10" fill="#000" textLength="31" lengthAdjust="spacingAndGlyphs" >1.23500</text>
<rect x="1240" y="277" width="2" height="1" fill="#000"/>
<text x="1245.5" y="281" font-size="10" fill="#000" textLength="31" lengthAdjust="spacingAndGlyphs" >1.23420</text>
<rect x="1240" y="311" width="2" height="1" fill="#000"/>
<text x="1245.5" y="315" font-size="10" fill="#000" textLength="31" lengthAdjust="spacingAndGlyphs" >1.23335</text>
<rect x="1240" y="344" width="2" height="1" fill="#000"/>
<rect x="1240" y="378" width="2" height="1" fill="#000"/>
<text x="1245.5" y="382" font-size="10" fill="#000" textLength="31" lengthAdjust="spacingAndGlyphs" >1.23170</text>
<rect x="1240" y="411" width="2" height="1" fill="#000"/>
<text x="1245.5" y="415" font-size="10" fill="#000" textLength="31" lengthAdjust="spacingAndGlyphs" >1.23090</text>
<rect x="1240" y="445" width="2" height="1" fill="#000"/>
<text x="1245.5" y="449" font-size="10" fill="#000" textLength="31" lengthAdjust="spacingAndGlyphs" >1.23005</text>
<rect x="1240" y="478" width="2" height="1" fill="#000"/>
<text x="1245.5" y="482" font-size="10" fill="#000" textLength="31" lengthAdjust="spacingAndGlyphs" >1.22925</text>
<rect x="1240" y="512" width="2" height="1" fill="#000"/>
<text x="1245.5" y="516" font-size="10" fill="#000" textLength="31" lengthAdjust="spacingAndGlyphs" >1.22840</text>
<rect x="1240" y="545" width="2" height="1" fill="#000"/>
<text x="1245.5" y="549" font-size="10" fill="#000" textLength="31" lengthAdjust="spacingAndGlyphs" >1.22760</text>
<rect x="1240" y="579" width="2" height="1" fill="#000"/>
<text x="1245.5" y="583" font-size="10" fill="#000" textLength="31" lengthAdjust="spacingAndGlyphs" >1.22675</text>
<rect x="1240" y="612" width="2" height="1" fill="#000"/>
<text x="1245.5" y="616" font-size="10" fill="#000" textLength="31" lengthAdjust="spacingAndGlyphs" >1.22595</text>
<rect x="1240" y="646" width="2" height="1" fill="#000"/>
<text x="1245.5" y="650" font-size="10" fill="#000" textLength="31" lengthAdjust="spacingAndGlyphs" >1.22510</text>
<rect x="1240" y="680" width="2" height="1" fill="#000"/>
<text x="1245.5" y="684" font-size="10" fill="#000" textLength="31" lengthAdjust="spacingAndGlyphs" >1.22425</text>
<rect x="1242" y="316" width="39" height="11" fill="#0000c8"/>
<text x="1245.5" y="325.5" font-size="10" fill="#fff" textLength="31" lengthAdjust="spacingAndGlyphs" >1.23308</text>
<rect x="1242" y="339" width="39" height="11" fill="#000"/>
<text x="1245.5" y="348.5" font-size="10" fill="#fff" textLength="31" lengthAdjust="spacingAndGlyphs" >1.23251</text>
<rect x="1242" y="394" width="39" height="11" fill="#0000c8"/>
<text x="1245.5" y="403.5" font-size="10" fill="#fff" textLength="31" lengthAdjust="spacingAndGlyphs" >1.23116</text>
<rect x="9" y="684" width="1" height="3" fill="#000"/>
<text x="9" y="696" font-size="10" fill="#000" textLength="49.5" lengthAdjust="spacingAndGlyphs" >14 Oct 2013</text>
<rect x="73" y="684" width="1" height="3" fill="#000"/>
<text x="73" y="696" font-size="10" fill="#000" textLength="53" lengthAdjust="spacingAndGlyphs" >15 Oct 16:00</text>
<rect x="137" y="684" width="1" height="3" fill="#000"/>
<text x="137" y="696" font-size="10" fill="#000" textLength="53" lengthAdjust="spacingAndGlyphs" >17 Oct 00:00</text>
<rect x="201" y="684" width="1" height="3" fill="#000"/>
<text x="201" y="696" font-size="10" fill="#000" textLength="53" lengthAdjust="spacingAndGlyphs" >18 Oct 08:00</text>
<rect x="265" y="684" width="1" height="3" fill="#000"/>
<text x="265" y="696" font-size="10" fill="#000" textLength="53" lengthAdjust="spacingAndGlyphs" >21 Oct 16:00</text>
<rect x="329" y="684" width="1" height="3" fill="#000"/>
<text x="329" y="696" font-size="10" fill="#000" textLength="54" lengthAdjust="spacingAndGlyphs" >23 Oct 00:00</text>
<rect x="393" y="684" width="1" height="3" fill="#000"/>
<text x="393" y="696" font-size="10" fill="#000" textLength="54" lengthAdjust="spacingAndGlyphs" >24 Oct 08:00</text>
<rect x="457" y="684" width="1" height="3" fill="#000"/>
<text x="457" y="696" font-size="10" fill="#000" textLength="53.5" lengthAdjust="spacingAndGlyphs" >25 Oct 16:00</text>
<rect x="521" y="684" width="1" height="3" fill="#000"/>
<text x="521" y="696" font-size="10" fill="#000" textLength="54" lengthAdjust="spacingAndGlyphs" >28 Oct 20:00</text>
<rect x="585" y="684" width="1" height="3" fill="#000"/>
<text x="585" y="696" font-size="10" fill="#000" textLength="54" lengthAdjust="spacingAndGlyphs" >30 Oct 04:00</text>
<rect x="649" y="684" width="1" height="3" fill="#000"/>
<text x="649" y="696" font-size="10" fill="#000" textLength="53.5" lengthAdjust="spacingAndGlyphs" >31 Oct 12:00</text>
<rect x="713" y="684" width="1" height="3" fill="#000"/>
<text x="713" y="696" font-size="10" fill="#000" textLength="49" lengthAdjust="spacingAndGlyphs" >1 Nov 20:00</text>
<rect x="777" y="684" width="1" height="3" fill="#000"/>
<text x="777" y="696" font-size="10" fill="#000" textLength="51.5" lengthAdjust="spacingAndGlyphs" >5 Nov 04:00</text>
<rect x="841" y="684" width="1" height="3" fill="#000"/>
<text x="841" y="696" font-size="10" fill="#000" textLength="51.5" lengthAdjust="spacingAndGlyphs" >6 Nov 12:00</text>
<rect x="905" y="684" width="1" height="3" fill="#000"/>
<text x="905" y="696" font-size="10" fill="#000" textLength="51.5" lengthAdjust="spacingAndGlyphs" >7 Nov 20:00</text>
<rect x="969" y="684" width="1" height="3" fill="#000"/>
<text x="969" y="696" font-size="10" fill="#000" textLength="56" lengthAdjust="spacingAndGlyphs" >11 Nov 04:00</text>
<rect x="4" y="703" width="1280" height="1" fill="#000"/>
<rect x="4" y="704" width="1280" height="19" fill="#dedede"/>
<rect x="4" y="704" width="2" height="19" fill="#6a6a64"/>
<rect x="4" y="723" width="1280" height="1" fill="#f4f4f4"/>
<text x="18.5" y="716.5" font-size="11" fill="#6e6e64" textLength="55.5" lengthAdjust="spacingAndGlyphs" >EURUSD,H1</text>
<text x="97.5" y="716.5" font-size="11" fill="#6e6e64" textLength="62" lengthAdjust="spacingAndGlyphs" >GBPJPY,Daily</text>
<text x="182.5" y="716.5" font-size="11" fill="#6e6e64" textLength="56" lengthAdjust="spacingAndGlyphs" >AUDUSD,H1</text>
<text x="263.5" y="716.5" font-size="11" fill="#6e6e64" textLength="55" lengthAdjust="spacingAndGlyphs" >EURGBP,H4</text>
<text x="341.5" y="716.5" font-size="11" fill="#6e6e64" textLength="63" lengthAdjust="spacingAndGlyphs" >GBPUSD,M15</text>
<text x="426.5" y="716.5" font-size="11" fill="#6e6e64" textLength="55" lengthAdjust="spacingAndGlyphs" >USDJPY,H4</text>
<text x="502.5" y="716.5" font-size="11" fill="#6e6e64" textLength="55" lengthAdjust="spacingAndGlyphs" >EURJPY,H4</text>
<text x="577.5" y="716.5" font-size="11" fill="#6e6e64" textLength="64" lengthAdjust="spacingAndGlyphs" >NZDUSD,Daily</text>
<text x="667.5" y="716.5" font-size="11" fill="#6e6e64" textLength="55" lengthAdjust="spacingAndGlyphs" >GBPCHF,H1</text>
<text x="745.5" y="716.5" font-size="11" fill="#6e6e64" textLength="62" lengthAdjust="spacingAndGlyphs" >GBPJPY,Daily</text>
<text x="829" y="716.5" font-size="11" fill="#6e6e64" textLength="65" lengthAdjust="spacingAndGlyphs" >XAUUSD,Daily</text>
<text x="918" y="716.5" font-size="11" fill="#6e6e64" textLength="57" lengthAdjust="spacingAndGlyphs" >USDCAD,H4</text>
<text x="999" y="716.5" font-size="11" fill="#6e6e64" textLength="55" lengthAdjust="spacingAndGlyphs" >EURGBP,H1</text>
<text x="1077" y="716.5" font-size="11" fill="#6e6e64" textLength="65" lengthAdjust="spacingAndGlyphs" >USDCHF,Daily</text>
<rect x="88" y="707" width="1" height="12" fill="#6e6e64"/>
<rect x="172" y="707" width="1" height="12" fill="#6e6e64"/>
<rect x="252" y="707" width="1" height="12" fill="#6e6e64"/>
<rect x="331" y="707" width="1" height="12" fill="#6e6e64"/>
<rect x="416" y="707" width="1" height="12" fill="#6e6e64"/>
<rect x="492" y="707" width="1" height="12" fill="#6e6e64"/>
<rect x="568" y="707" width="1" height="12" fill="#6e6e64"/>
<rect x="655" y="707" width="1" height="12" fill="#6e6e64"/>
<rect x="736" y="707" width="1" height="12" fill="#6e6e64"/>
<rect x="820" y="707" width="1" height="12" fill="#6e6e64"/>
<rect x="908" y="707" width="1" height="12" fill="#6e6e64"/>
<rect x="988" y="707" width="1" height="12" fill="#6e6e64"/>
<rect x="1068" y="707" width="1" height="12" fill="#6e6e64"/>
<path d="M1156.5 703 V721.5 H1235.5 V703" fill="#fff" stroke="#000"/>
<rect x="1157" y="703" width="78" height="18" fill="#fff"/>
<text x="1166.5" y="716.5" font-size="11" fill="#000" textLength="56.5" lengthAdjust="spacingAndGlyphs" >EURCHF,H4</text>
<path d="M1259 709 v8 l-4 -4 z" fill="#a0a0a0"/><path d="M1273 709 v8 l4 -4 z" fill="#000"/>
<rect x="4" y="724" width="1280" height="20" fill="#e2e2e2"/>
<text x="6" y="739" font-size="11" fill="#000" textLength="128" lengthAdjust="spacingAndGlyphs" >Для справки, нажмите F1</text>
<rect x="563" y="726" width="1" height="17" fill="#b8b8b8"/><rect x="564" y="726" width="1" height="17" fill="#fff"/>
<rect x="672" y="726" width="1" height="17" fill="#b8b8b8"/><rect x="673" y="726" width="1" height="17" fill="#fff"/>
<rect x="773" y="726" width="1" height="17" fill="#b8b8b8"/><rect x="774" y="726" width="1" height="17" fill="#fff"/>
<rect x="845" y="726" width="1" height="17" fill="#b8b8b8"/><rect x="846" y="726" width="1" height="17" fill="#fff"/>
<rect x="916" y="726" width="1" height="17" fill="#b8b8b8"/><rect x="917" y="726" width="1" height="17" fill="#fff"/>
<rect x="985" y="726" width="1" height="17" fill="#b8b8b8"/><rect x="986" y="726" width="1" height="17" fill="#fff"/>
<rect x="1056" y="726" width="1" height="17" fill="#b8b8b8"/><rect x="1057" y="726" width="1" height="17" fill="#fff"/>
<rect x="1122" y="726" width="1" height="17" fill="#b8b8b8"/><rect x="1123" y="726" width="1" height="17" fill="#fff"/>
<rect x="1128" y="729" width="2" height="5" fill="#5a7a10"/>
<rect x="1128" y="739" width="2" height="2" fill="#a01010"/>
<rect x="1131" y="729" width="2" height="5" fill="#5a7a10"/>
<rect x="1131" y="738" width="2" height="3" fill="#a01010"/>
<rect x="1134" y="729" width="2" height="5" fill="#5a7a10"/>
<rect x="1134" y="737" width="2" height="4" fill="#a01010"/>
<rect x="1137" y="729" width="2" height="6" fill="#5a7a10"/>
<rect x="1137" y="736" width="2" height="5" fill="#a01010"/>
<rect x="1140" y="729" width="2" height="6" fill="#5a7a10"/>
<rect x="1140" y="735" width="2" height="6" fill="#a01010"/>
<rect x="1143" y="729" width="2" height="6" fill="#5a7a10"/>
<rect x="1143" y="734" width="2" height="7" fill="#a01010"/>
<rect x="1146" y="729" width="2" height="7" fill="#5a7a10"/>
<rect x="1146" y="733" width="2" height="8" fill="#a01010"/>
<rect x="1149" y="729" width="2" height="7" fill="#5a7a10"/>
<rect x="1149" y="732" width="2" height="9" fill="#a01010"/>
<text x="1175.5" y="739" font-size="11" fill="#000" textLength="47.5" lengthAdjust="spacingAndGlyphs" >4034/5 kb</text>
<path d="M1282 730 l-14 14 M1282 734 l-10 10 M1282 738 l-6 6" stroke="#a0a0a0" shape-rendering="auto"/>
<rect x="4" y="744" width="1280" height="4" fill="#8a8a8c"/>
<rect x="4" y="744" width="1280" height="1" fill="#404040"/>
<path d="M4 744 H44 L47 748 H4 Z" fill="#f08a30"/>
<rect x="4" y="744" width="41" height="1" fill="#c05008"/><rect x="4" y="745" width="42" height="1" fill="#ffd070"/>
</svg></body></html>
